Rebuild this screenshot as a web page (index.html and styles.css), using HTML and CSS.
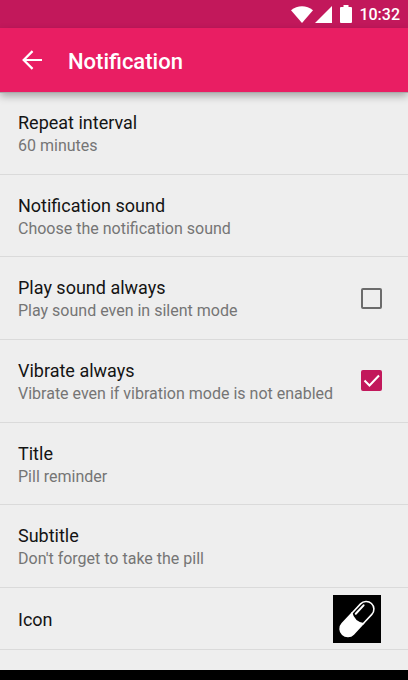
FILE: index.html
```html
<!DOCTYPE html>
<html lang="en">
<head>
<meta charset="utf-8">
<meta name="viewport" content="width=device-width, initial-scale=1">
<title>Notification</title>
<link rel="stylesheet" href="styles.css">
</head>
<body>
<div class="status-bar">
  <svg class="wifi" viewBox="0 0 22 17" aria-hidden="true"><path d="M0 4.2C6.500 -1.100 15.500 -1.100 22 4.200L11 17Z"/></svg>
  <svg class="signal" viewBox="0 0 17 17" aria-hidden="true"><path d="M17 0V17H0Z"/></svg>
  <svg class="battery" viewBox="0 0 12 18" aria-hidden="true"><path d="M3.500 0H8.500V2H11Q12 2 12 3V17Q12 18 11 18H1Q0 18 0 17V3Q0 2 1 2H3.500Z"/></svg>
  <span class="clock">10:32</span>
</div>
<header class="app-bar">
  <button class="back" type="button" aria-label="Back">
    <svg viewBox="0 0 18 18" aria-hidden="true"><path d="M9.500 1L1.500 9L9.500 17M1.500 9H18"/></svg>
  </button>
  <h1>Notification</h1>
</header>
<main class="settings">
  <button class="row" type="button"><span class="text"><span class="title">Repeat interval</span><span class="summary">60 minutes</span></span></button>
  <button class="row" type="button"><span class="text"><span class="title">Notification sound</span><span class="summary">Choose the notification sound</span></span></button>
  <label class="row" for="play-sound"><span class="text"><span class="title">Play sound always</span><span class="summary">Play sound even in silent mode</span></span><span class="check-wrap"><input class="check" id="play-sound" type="checkbox"><svg class="tick" viewBox="0 0 21 21" aria-hidden="true"><path d="M3.500 10.500L8.500 15.500L18 5.500"/></svg></span></label>
  <label class="row" for="vibrate"><span class="text"><span class="title">Vibrate always</span><span class="summary">Vibrate even if vibration mode is not enabled</span></span><span class="check-wrap"><input class="check" id="vibrate" type="checkbox" checked><svg class="tick" viewBox="0 0 21 21" aria-hidden="true"><path d="M3.500 10.500L8.500 15.500L18 5.500"/></svg></span></label>
  <button class="row" type="button"><span class="text"><span class="title">Title</span><span class="summary">Pill reminder</span></span></button>
  <button class="row" type="button"><span class="text"><span class="title">Subtitle</span><span class="summary">Don't forget to take the pill</span></span></button>
  <button class="row row-icon" type="button"><span class="text"><span class="title">Icon</span></span>
    <svg class="pill" viewBox="0 0 48 48" aria-hidden="true">
      <rect class="pill-bg" width="48" height="48"/>
      <g transform="translate(24 24) rotate(43)">
        <path class="pill-fill" d="M-8.500 -2Q0 4 8.500 -2V13.500A8.500 8.500 0 0 1 -8.500 13.500Z"/>
        <path class="pill-line" d="M-7.700 0V-13.500A7.700 7.700 0 0 1 7.700 -13.500V0"/>
        <path class="pill-shine" d="M-4.500 -3V-14.500"/>
      </g>
    </svg>
  </button>
</main>
<footer class="nav-bar"></footer>
</body>
</html>
```
FILE: styles.css
```css
* {
  box-sizing: border-box;
}

body {
  margin: 0;
  min-height: 100vh;
  display: flex;
  flex-direction: column;
  background: #eee;
  color: #141414;
  font-family: Roboto, "Noto Sans", sans-serif;
}

.status-bar {
  height: 28px;
  padding: 0 8px 0 0;
  display: flex;
  align-items: center;
  justify-content: flex-end;
  background: #c2185b;
  color: #fff;
}

.status-bar svg {
  fill: currentColor;
}

.wifi {
  width: 22px;
  height: 17px;
  margin-right: 2px;
}

.signal {
  width: 17px;
  height: 17px;
  margin-right: 8px;
}

.battery {
  width: 12px;
  height: 18px;
  margin-right: 7px;
}

.clock {
  padding-top: 2px;
  font-size: 16px;
  font-weight: 500;
  line-height: 26px;
}

.app-bar {
  position: relative;
  height: 64px;
  padding: 0 18px;
  display: flex;
  align-items: center;
  gap: 22px;
  background: #e91e63;
  color: #fff;
  box-shadow: 0 1px 0 #aaa, 0 4px 8px rgba(0, 0, 0, 0.3);
}

.back {
  width: 28px;
  height: 28px;
  padding: 4px;
  border: 0;
  background: none;
  color: inherit;
}

.back svg {
  display: block;
  width: 20px;
  height: 20px;
  fill: none;
  stroke: currentColor;
  stroke-width: 2;
}

h1 {
  margin: 0;
  padding-top: 4px;
  font-size: 22px;
  font-weight: 500;
  line-height: 28px;
}

.settings {
  flex: 1;
  display: flex;
  flex-direction: column;
  padding-bottom: 20px;
}

.row {
  flex: 1 0 72px;
  width: 100%;
  padding: 0 26px 0 18px;
  display: flex;
  align-items: center;
  justify-content: space-between;
  border: 0;
  border-bottom: 1px solid #dadada;
  background: none;
  color: inherit;
  font: inherit;
  text-align: left;
}

.row-icon {
  flex: 0 0 62px;
  padding-right: 27px;
}

.text {
  display: flex;
  flex-direction: column;
  padding-top: 2px;
}

.title {
  font-size: 18px;
  line-height: 23px;
}

.summary {
  color: #757575;
  font-size: 16px;
  line-height: 23px;
}

.check-wrap {
  position: relative;
  display: flex;
}

.check {
  appearance: none;
  flex: none;
  width: 21px;
  height: 21px;
  margin: 0;
  border: 2px solid #6b6b6b;
  border-radius: 2px;
}

.check:checked {
  border-color: #c2185b;
  background: #c2185b;
}

.tick {
  position: absolute;
  inset: 0;
  fill: none;
  stroke: #fff;
  stroke-width: 2;
  pointer-events: none;
}

.check:not(:checked) + .tick {
  display: none;
}

.pill {
  width: 48px;
  height: 48px;
}

.pill-bg {
  fill: #000;
}

.pill-fill {
  fill: #fff;
}

.pill-line,
.pill-shine {
  fill: none;
  stroke: #fff;
}

.pill-line {
  stroke-width: 1.6;
}

.pill-shine {
  stroke-width: 2;
  stroke-linecap: round;
}

.nav-bar {
  height: 10px;
  background: #000;
}
```
